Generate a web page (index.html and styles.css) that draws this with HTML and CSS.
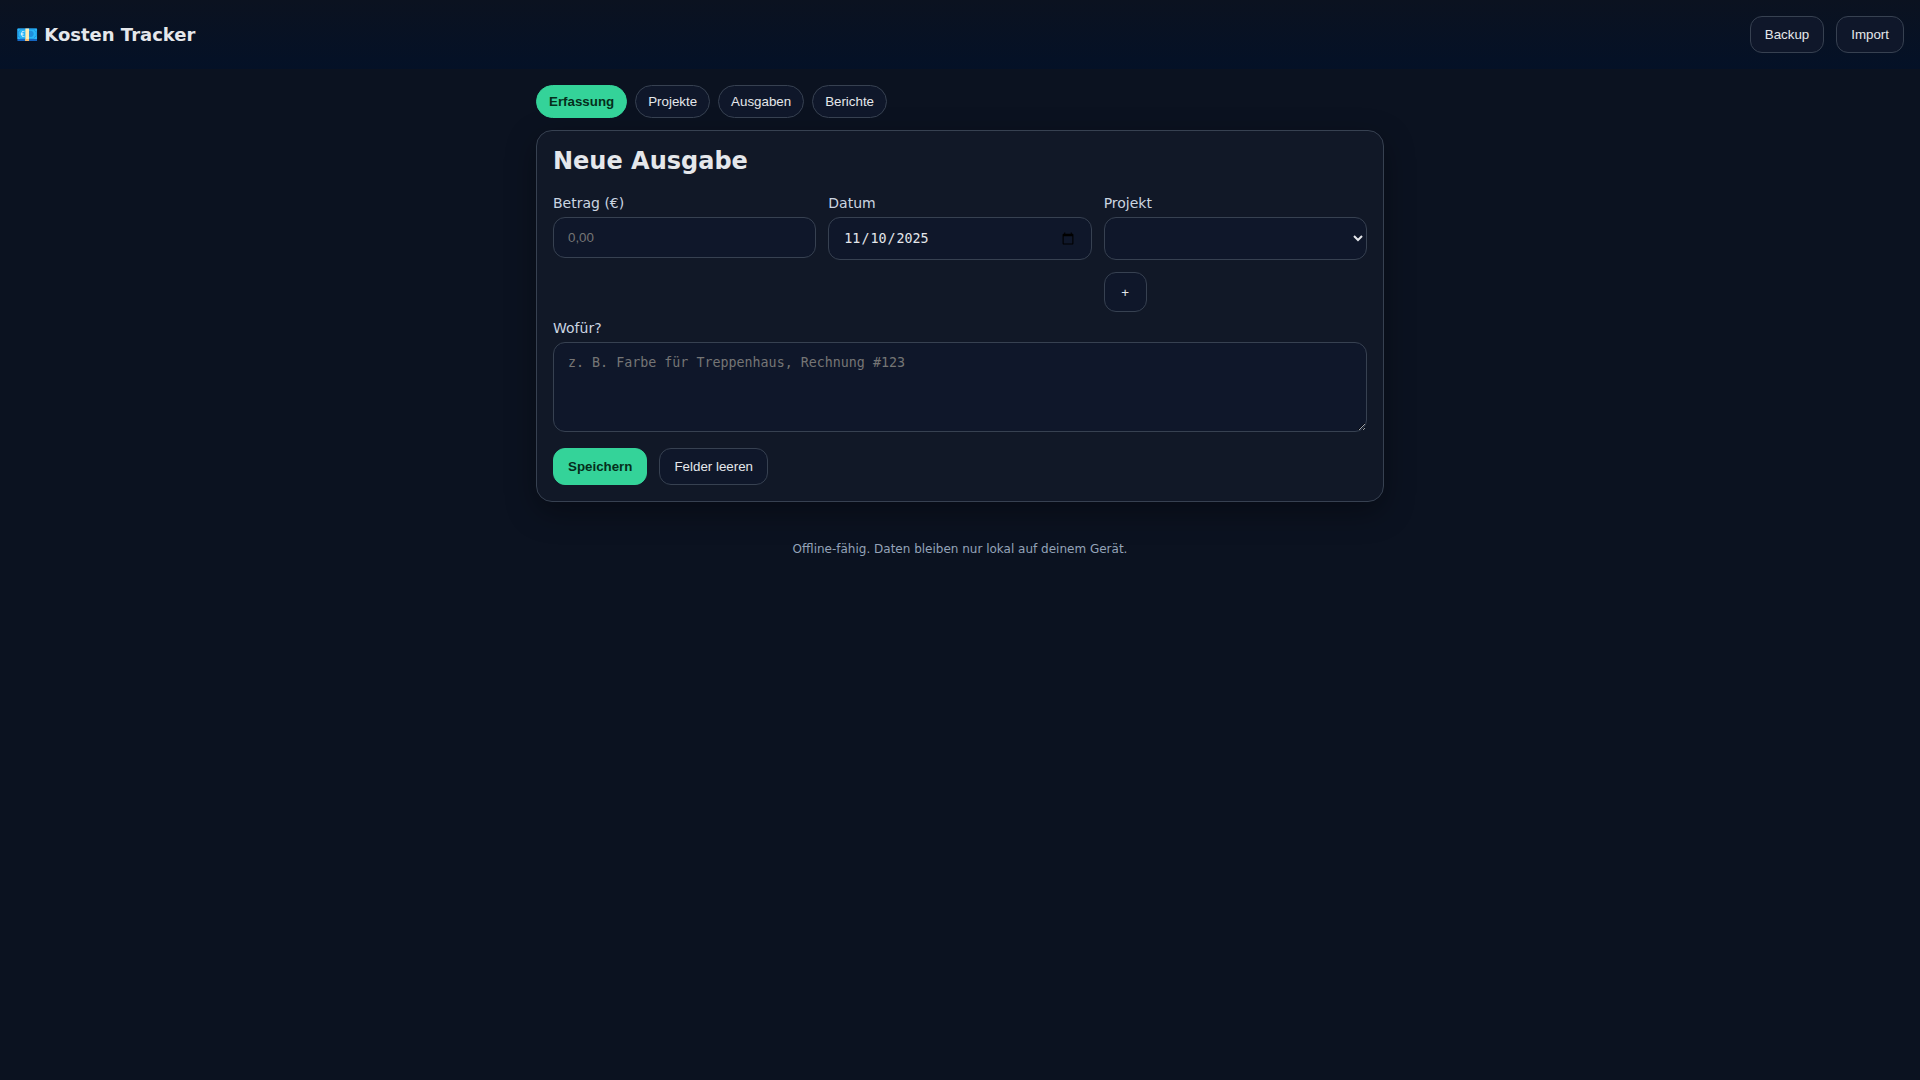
FILE: index.html
```html
<!DOCTYPE html>
<html lang="de">
<head>
    <meta charset="UTF-8">
    <meta name="viewport" content="width=device-width, initial-scale=1.0">
    <title>Kosten Tracker</title>
    <link rel="stylesheet" href="styles.css">
</head>
<body>
    <header class="topbar">
        <h1>💶 Kosten Tracker</h1>
        <div class="actions">
            <button type="button" class="btn">Backup</button>
            <button type="button" class="btn">Import</button>
        </div>
    </header>

    <main class="container">
        <nav class="tabs">
            <button type="button" class="tab active">Erfassung</button>
            <button type="button" class="tab">Projekte</button>
            <button type="button" class="tab">Ausgaben</button>
            <button type="button" class="tab">Berichte</button>
        </nav>

        <section class="card">
            <h2>Neue Ausgabe</h2>
            <form>
                <div class="grid">
                    <div class="field">
                        <label for="amount">Betrag (€)</label>
                        <input type="text" id="amount" inputmode="decimal" placeholder="0,00">
                    </div>
                    <div class="field">
                        <label for="date">Datum</label>
                        <input type="date" id="date" value="2025-11-10">
                    </div>
                    <div class="field">
                        <label for="project">Projekt</label>
                        <select id="project"></select>
                        <button type="button" class="btn add" aria-label="Projekt hinzufügen">+</button>
                    </div>
                </div>
                <div class="field note">
                    <label for="note">Wofür?</label>
                    <textarea id="note" placeholder="z. B. Farbe für Treppenhaus, Rechnung #123"></textarea>
                </div>
                <div class="actions">
                    <button type="button" class="btn primary">Speichern</button>
                    <button type="reset" class="btn">Felder leeren</button>
                </div>
            </form>
        </section>
    </main>

    <footer class="footer">Offline-fähig. Daten bleiben nur lokal auf deinem Gerät.</footer>
</body>
</html>
```
FILE: styles.css
```css
* {
    box-sizing: border-box;
}

body {
    margin: 0;
    font-family: "DejaVu Sans", sans-serif;
    background: #0b1220;
    color: #e5e7eb;
}

.topbar {
    display: flex;
    align-items: center;
    justify-content: space-between;
    padding: 16px;
    background: linear-gradient(180deg, #0b1220, #041127);
}

h1 {
    margin: 0;
    font-size: 18px;
}

.actions {
    display: flex;
    gap: 12px;
}

.container {
    max-width: 880px;
    margin: 0 auto;
    padding: 16px;
}

.tabs {
    display: flex;
    gap: 8px;
    margin-bottom: 12px;
}

.tab,
.btn {
    font-family: "Liberation Sans", Arial, sans-serif;
    border: 1px solid #374151;
    background: #0f172a;
    color: #e5e7eb;
    cursor: pointer;
}

.tab {
    padding: 8px 12px;
    border-radius: 999px;
}

.btn {
    padding: 10px 14px;
    border-radius: 12px;
}

.tab.active,
.btn.primary {
    background: #34d399;
    border-color: #34d399;
    color: #052e1b;
    font-weight: bold;
}

.card {
    padding: 16px;
    background: #111827;
    border: 1px solid #374151;
    border-radius: 16px;
    box-shadow: 0 10px 30px rgba(0, 0, 0, 0.35);
}

h2 {
    margin: 0 0 20px;
    font-size: 24px;
    line-height: 28px;
}

.grid {
    display: grid;
    grid-template-columns: repeat(3, 1fr);
    gap: 12px;
}

label {
    display: block;
    margin-bottom: 6px;
    font-size: 14px;
    line-height: 16px;
    color: #cbd5e1;
}

input,
select,
textarea {
    display: block;
    width: 100%;
    padding: 12px 14px;
    background: #0f172a;
    color: #e5e7eb;
    border: 1px solid #374151;
    border-radius: 12px;
}

input {
    font-family: "Liberation Sans", Arial, sans-serif;
}

input[type="date"],
textarea {
    font-family: "DejaVu Sans Mono", monospace;
}

input[type="date"],
select {
    height: 43px;
}

textarea {
    min-height: 90px;
    resize: vertical;
}

.add {
    width: 43px;
    height: 40px;
    margin-top: 12px;
}

.note {
    margin: 8px 0 16px;
}

.footer {
    padding: 24px 16px;
    font-size: 12px;
    text-align: center;
    color: #94a3b8;
}

@media (max-width: 640px) {
    .grid {
        grid-template-columns: 1fr;
    }
}
```
